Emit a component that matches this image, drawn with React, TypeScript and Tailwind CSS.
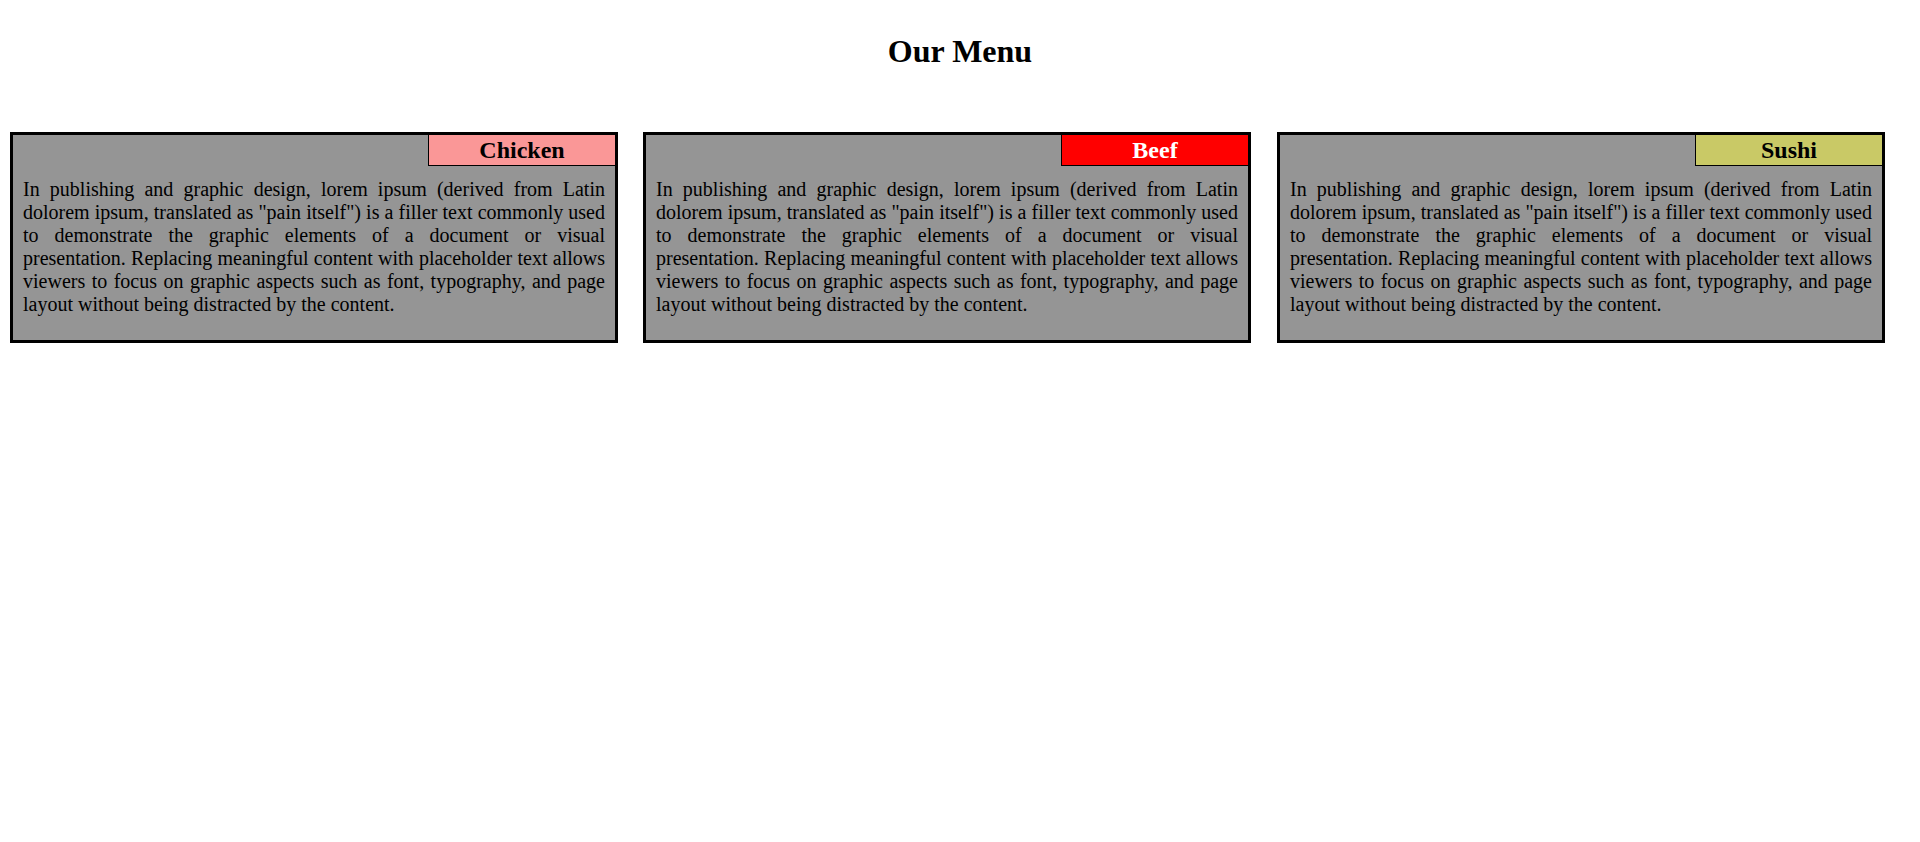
import React from "react";

const LOREM =
  'In publishing and graphic design, lorem ipsum (derived from Latin dolorem ipsum, translated as "pain itself") is a filler text commonly used to demonstrate the graphic elements of a document or visual presentation. Replacing meaningful content with placeholder text allows viewers to focus on graphic aspects such as font, typography, and page layout without being distracted by the content.';

const items = [
  { name: "Chicken", cls: "bg-[#fa9797] text-black", card: "" },
  { name: "Beef", cls: "bg-[#ff0000] text-white", card: "" },
  { name: "Sushi", cls: "bg-[#c9c966] text-black", card: "ml-px" },
];

export default function App() {
  return (
    <div className="min-h-[842px] bg-white text-black font-['Liberation_Serif','Times_New_Roman',serif]">
      <h1 className="pt-[33px] text-center text-[32px] font-bold leading-[37px]">Our Menu</h1>
      <div className="mt-[62px] flex gap-[25px] pl-[10px]">
        {items.map((it) => (
          <div key={it.name} className={`w-[608px] border-[3px] border-black bg-[#959595] ${it.card}`}>
            <div className="flex justify-end">
              <div
                className={`h-[31px] w-[187px] border-b border-l border-black text-center text-[24px] font-bold leading-[30px] ${it.cls}`}
              >
                {it.name}
              </div>
            </div>
            <p className="px-[10px] pt-[12px] pb-[24px] text-justify text-[20px] leading-[23px]">{LOREM}</p>
          </div>
        ))}
      </div>
    </div>
  );
}
